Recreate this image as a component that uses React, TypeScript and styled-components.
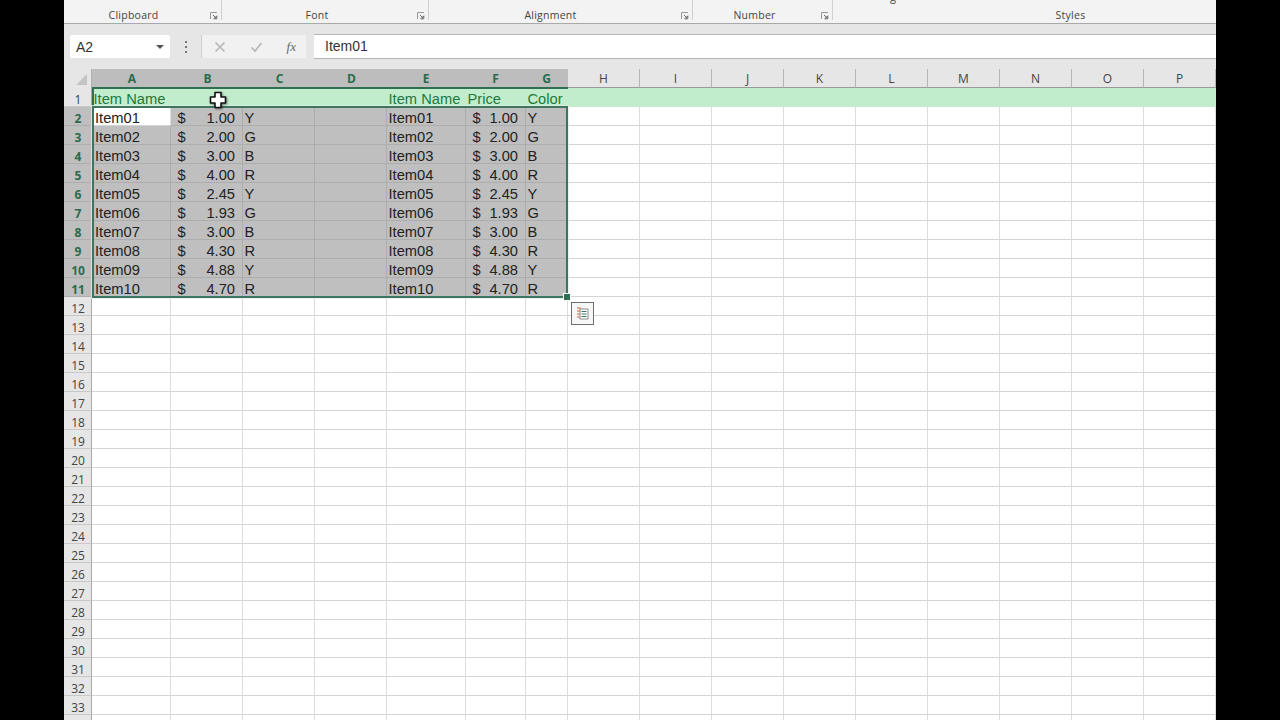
import React from 'react';
import styled, { createGlobalStyle } from 'styled-components';

const Global = createGlobalStyle`
  html, body { margin: 0; padding: 0; background: #000; }
  body { font-family: "Liberation Sans", Arial, sans-serif; }
`;

const Screen = styled.div`
  width: 1152px; height: 720px; margin: 0 auto; background: #e6e6e6;
  overflow: hidden; display: flex; flex-direction: column;
`;

const Ribbon = styled.div`
  height: 23px; flex: none; display: flex; background: #f3f3f3; border-bottom: 1px solid #a9a9a9;
`;
const Group = styled.div<{ $w: number; $pad: number }>`
  position: relative; flex: none; width: ${p => p.$w}px; height: 20px; box-sizing: border-box;
  padding-right: ${p => p.$pad}px; display: flex; align-items: flex-end; justify-content: center;
  border-right: 1px solid #cfcfcf;
  font: 10.5px/10px "Open Sans", sans-serif; letter-spacing: .25px; color: #444;
`;
const Launcher = styled.svg`
  position: absolute; right: 3px; bottom: 0; width: 8px; height: 8px;
`;
const Clipped = styled.span`
  position: absolute; left: 57px; top: -10px; font: 11px/14px "Open Sans", sans-serif; color: #444;
`;

const FormulaBar = styled.div`
  height: 35px; flex: none; display: flex; align-items: stretch; padding-left: 6px; box-sizing: border-box;
`;
const NameBox = styled.div`
  width: 100px; height: 23px; margin-top: 11px; box-sizing: border-box; background: #fff;
  border-radius: 2px; display: flex; align-items: center; justify-content: space-between;
  padding: 0 6px 0 6px; font-size: 14px; color: #333;
`;
const Caret = styled.span`
  width: 0; height: 0; border-left: 4px solid transparent; border-right: 4px solid transparent;
  border-top: 4px solid #555;
`;
const Dots = styled.div`
  width: 31px; margin-top: 11px; height: 23px; display: flex; flex-direction: column; gap: 3px;
  align-items: center; justify-content: center;
  & > i { width: 2px; height: 2px; background: #777; display: block; }
`;
const FxBox = styled.div`
  width: 105px; height: 23px; margin-top: 11px; box-sizing: border-box; background: #f1f1f1;
  border-left: 1px solid #d0d0d0; display: flex; align-items: center; justify-content: space-between;
  padding: 0 10px 0 12px; color: #aaa;
`;
const Fx = styled.span`
  font: italic 13px "Liberation Serif", serif; color: #666;
`;
const FormulaInput = styled.div`
  margin-left: 8px; flex: 1; margin-top: 10px; height: 25px; box-sizing: border-box; background: #fff;
  border-top: 1px solid #b5b5b5; border-bottom: 1px solid #b5b5b5; padding-left: 11px;
  font-size: 14px; line-height: 23px; color: #333;
`;
const Spacer = styled.div`
  height: 10px; flex: none; background: #e6e6e6;
`;

const SheetWrap = styled.div`
  position: relative; flex: 1; overflow: hidden; background: #fff;
`;
const Sheet = styled.div`
  display: grid;
  grid-template-columns: 28px 79px 72px 72px 72px 79px 60px 42px repeat(9, 72px);
  grid-auto-rows: 19px;
`;
const Corner = styled.div`
  background: #e6e6e6; border-right: 1px solid #b0b0b0; position: relative;
  &::after {
    content: ""; position: absolute; right: 4px; bottom: 3px; width: 0; height: 0;
    border-left: 11px solid transparent; border-bottom: 11px solid #c4c4c4;
  }
`;
const ColHead = styled.div<{ $on: boolean }>`
  box-sizing: border-box; display: flex; align-items: center; justify-content: center;
  font: ${p => (p.$on ? 'bold' : 'normal')} 12px "Open Sans", sans-serif;
  background: ${p => (p.$on ? '#bdbdbd' : '#e6e6e6')};
  color: ${p => (p.$on ? '#2a6b4c' : '#444')};
  border-right: 1px solid ${p => (p.$on ? '#bdbdbd' : '#b5b5b5')};
  border-bottom: 1px solid #9a9a9a;
  &:nth-child(-n + 5) { padding-left: 2px; }
`;
const RowHead = styled.div<{ $on: boolean }>`
  box-sizing: border-box; display: flex; align-items: center; justify-content: center;
  padding: 4px 0 0 1px;
  font: ${p => (p.$on ? 'bold' : 'normal')} 12px "Open Sans", sans-serif;
  background: ${p => (p.$on ? '#bfbfbf' : '#e6e6e6')};
  color: ${p => (p.$on ? '#2a6b4c' : '#444')};
  border-right: 1px solid #a8a8a8;
  border-bottom: 1px solid ${p => (p.$on ? '#adadad' : '#c8c8c8')};
`;
const Cell = styled.div<{ $kind: 'plain' | 'head' | 'sel' | 'active' }>`
  box-sizing: border-box; display: flex; align-items: flex-end; justify-content: space-between;
  padding: 0 1.5px; white-space: nowrap;
  font-size: 14.7px; line-height: 14px;
  color: ${p => (p.$kind === 'head' ? '#1d7a3a' : '#222')};
  background: ${p =>
    p.$kind === 'head' ? '#c2edcd' : p.$kind === 'sel' ? '#bfbfbf' : '#fff'};
  border-right: 1px solid ${p =>
    p.$kind === 'head' ? '#c2edcd' : p.$kind === 'sel' ? '#adadad' : '#dcdcdc'};
  border-bottom: 1px solid ${p =>
    p.$kind === 'head' ? '#c2edcd' : p.$kind === 'sel' ? '#adadad' : '#d4d4d4'};
`;
const NameCell = styled(Cell)`
  padding-left: 3px;
`;
const Money = styled(Cell)`
  padding: 0 7px 0 6.5px;
`;

const RowOneFrame = styled.div`
  position: absolute; left: 28px; top: 18px; width: 476px; height: 19px; box-sizing: border-box;
  border-top: 2px solid #2f6f52; border-left: 2px solid #2f6f52; pointer-events: none;
`;
const SelFrame = styled.div`
  position: absolute; left: 28px; top: 37px; width: 476px; height: 192px; box-sizing: border-box;
  border: 2px solid #3f7560; outline: 1px solid rgba(225, 240, 232, .8); pointer-events: none;
`;
const FillHandle = styled.div`
  position: absolute; left: 499px; top: 224px; width: 6px; height: 6px; background: #2f6f52;
  border: 1px solid #fff;
`;
const QuickBtn = styled.div`
  position: absolute; left: 507px; top: 233px; width: 23px; height: 23px; box-sizing: border-box;
  border: 1px solid #6e6e6e; background: #f7f7f7; display: flex; align-items: center; justify-content: center;
`;
const Cursor = styled.svg`
  position: absolute; left: 145px; top: 22px; width: 18px; height: 18px;
  filter: drop-shadow(1px 1px 1px rgba(0, 0, 0, .45));
`;

const cols = ['A','B','C','D','E','F','G','H','I','J','K','L','M','N','O','P'];
const data: [string, string, string][] = [
  ['Item01','1.00','Y'],['Item02','2.00','G'],['Item03','3.00','B'],['Item04','4.00','R'],['Item05','2.45','Y'],
  ['Item06','1.93','G'],['Item07','3.00','B'],['Item08','4.30','R'],['Item09','4.88','Y'],['Item10','4.70','R'],
];

const LauncherIcon = () => (
  <Launcher viewBox="0 0 8 8">
    <path d="M.5 7V.5H7" fill="none" stroke="#9a9a9a" />
    <path d="M3 3l3 3M6.8 3.8v3h-3z" fill="none" stroke="#666" />
  </Launcher>
);

const blanks = (n: number, kind: 'plain' | 'head', prefix: string) =>
  Array.from({ length: n }, (_, i) => <Cell key={prefix + i} $kind={kind} />);

export default function App() {
  const empties: React.ReactNode[] = [];
  for (let r = 12; r <= 34; r++) {
    empties.push(<RowHead key={'h' + r} $on={false}>{r < 34 ? r : ''}</RowHead>);
    empties.push(...blanks(16, 'plain', `e${r}-`));
  }
  return (
    <>
      <Global />
      <Screen>
        <Ribbon>
          <Group $w={158} $pad={18}>Clipboard<LauncherIcon /></Group>
          <Group $w={207} $pad={16}>Font<LauncherIcon /></Group>
          <Group $w={264} $pad={20}>Alignment<LauncherIcon /></Group>
          <Group $w={140} $pad={16}>Number<LauncherIcon /></Group>
          <Group $w={476} $pad={0}><Clipped>g</Clipped>Styles</Group>
        </Ribbon>
        <FormulaBar>
          <NameBox>A2<Caret /></NameBox>
          <Dots><i /><i /><i /></Dots>
          <FxBox>
            <svg width="12" height="12" viewBox="0 0 12 12"><path d="M1.500 1.500l9 9M10.500 1.500l-9 9" stroke="#b5b5b5" strokeWidth="1.6" /></svg>
            <svg width="13" height="12" viewBox="0 0 13 12"><path d="M1.500 6.500l3.500 3.500 6.500-8" fill="none" stroke="#b5b5b5" strokeWidth="1.6" /></svg>
            <Fx>fx</Fx>
          </FxBox>
          <FormulaInput>Item01</FormulaInput>
        </FormulaBar>
        <Spacer />
        <SheetWrap>
          <Sheet>
            <Corner />
            {cols.map((c, i) => <ColHead key={c} $on={i < 7}>{c}</ColHead>)}

            <RowHead $on={false}>1</RowHead>
            <Cell $kind="head">Item Name</Cell>
            {blanks(3, 'head', 'r1a')}
            <Cell $kind="head">Item Name</Cell>
            <Cell $kind="head">Price</Cell>
            <Cell $kind="head">Color</Cell>
            {blanks(9, 'head', 'r1b')}

            {data.map(([name, price, color], i) => (
              <React.Fragment key={name}>
                <RowHead $on>{i + 2}</RowHead>
                <NameCell $kind={i === 0 ? 'active' : 'sel'}>{name}</NameCell>
                <Money $kind="sel"><span>$</span><span>{price}</span></Money>
                <Cell $kind="sel">{color}</Cell>
                <Cell $kind="sel" />
                <Cell $kind="sel">{name}</Cell>
                <Money $kind="sel"><span>$</span><span>{price}</span></Money>
                <Cell $kind="sel">{color}</Cell>
                {blanks(9, 'plain', `r${i}-`)}
              </React.Fragment>
            ))}
            {empties}
          </Sheet>
          <RowOneFrame />
          <SelFrame />
          <FillHandle />
          <QuickBtn>
            <svg width="15" height="15" viewBox="0 0 15 15">
              <path d="M2 2h4M2 5h3M2 8h3M2 11h3" stroke="#e0926a" strokeWidth="1.5" />
              <path d="M5 3h8v10H5z" fill="#fff" stroke="#8a8a8a" />
              <path d="M6.500 5.500h5M6.500 8h5M6.500 10.500h5" stroke="#3f7560" />
            </svg>
          </QuickBtn>
          <Cursor viewBox="0 0 18 18">
            <path d="M6 1.500h6v4.500h4.500v6H12v4.500H6V12H1.500V6H6z" fill="#fff" stroke="#111" strokeWidth="1.6" strokeLinejoin="round" />
          </Cursor>
        </SheetWrap>
      </Screen>
    </>
  );
}
